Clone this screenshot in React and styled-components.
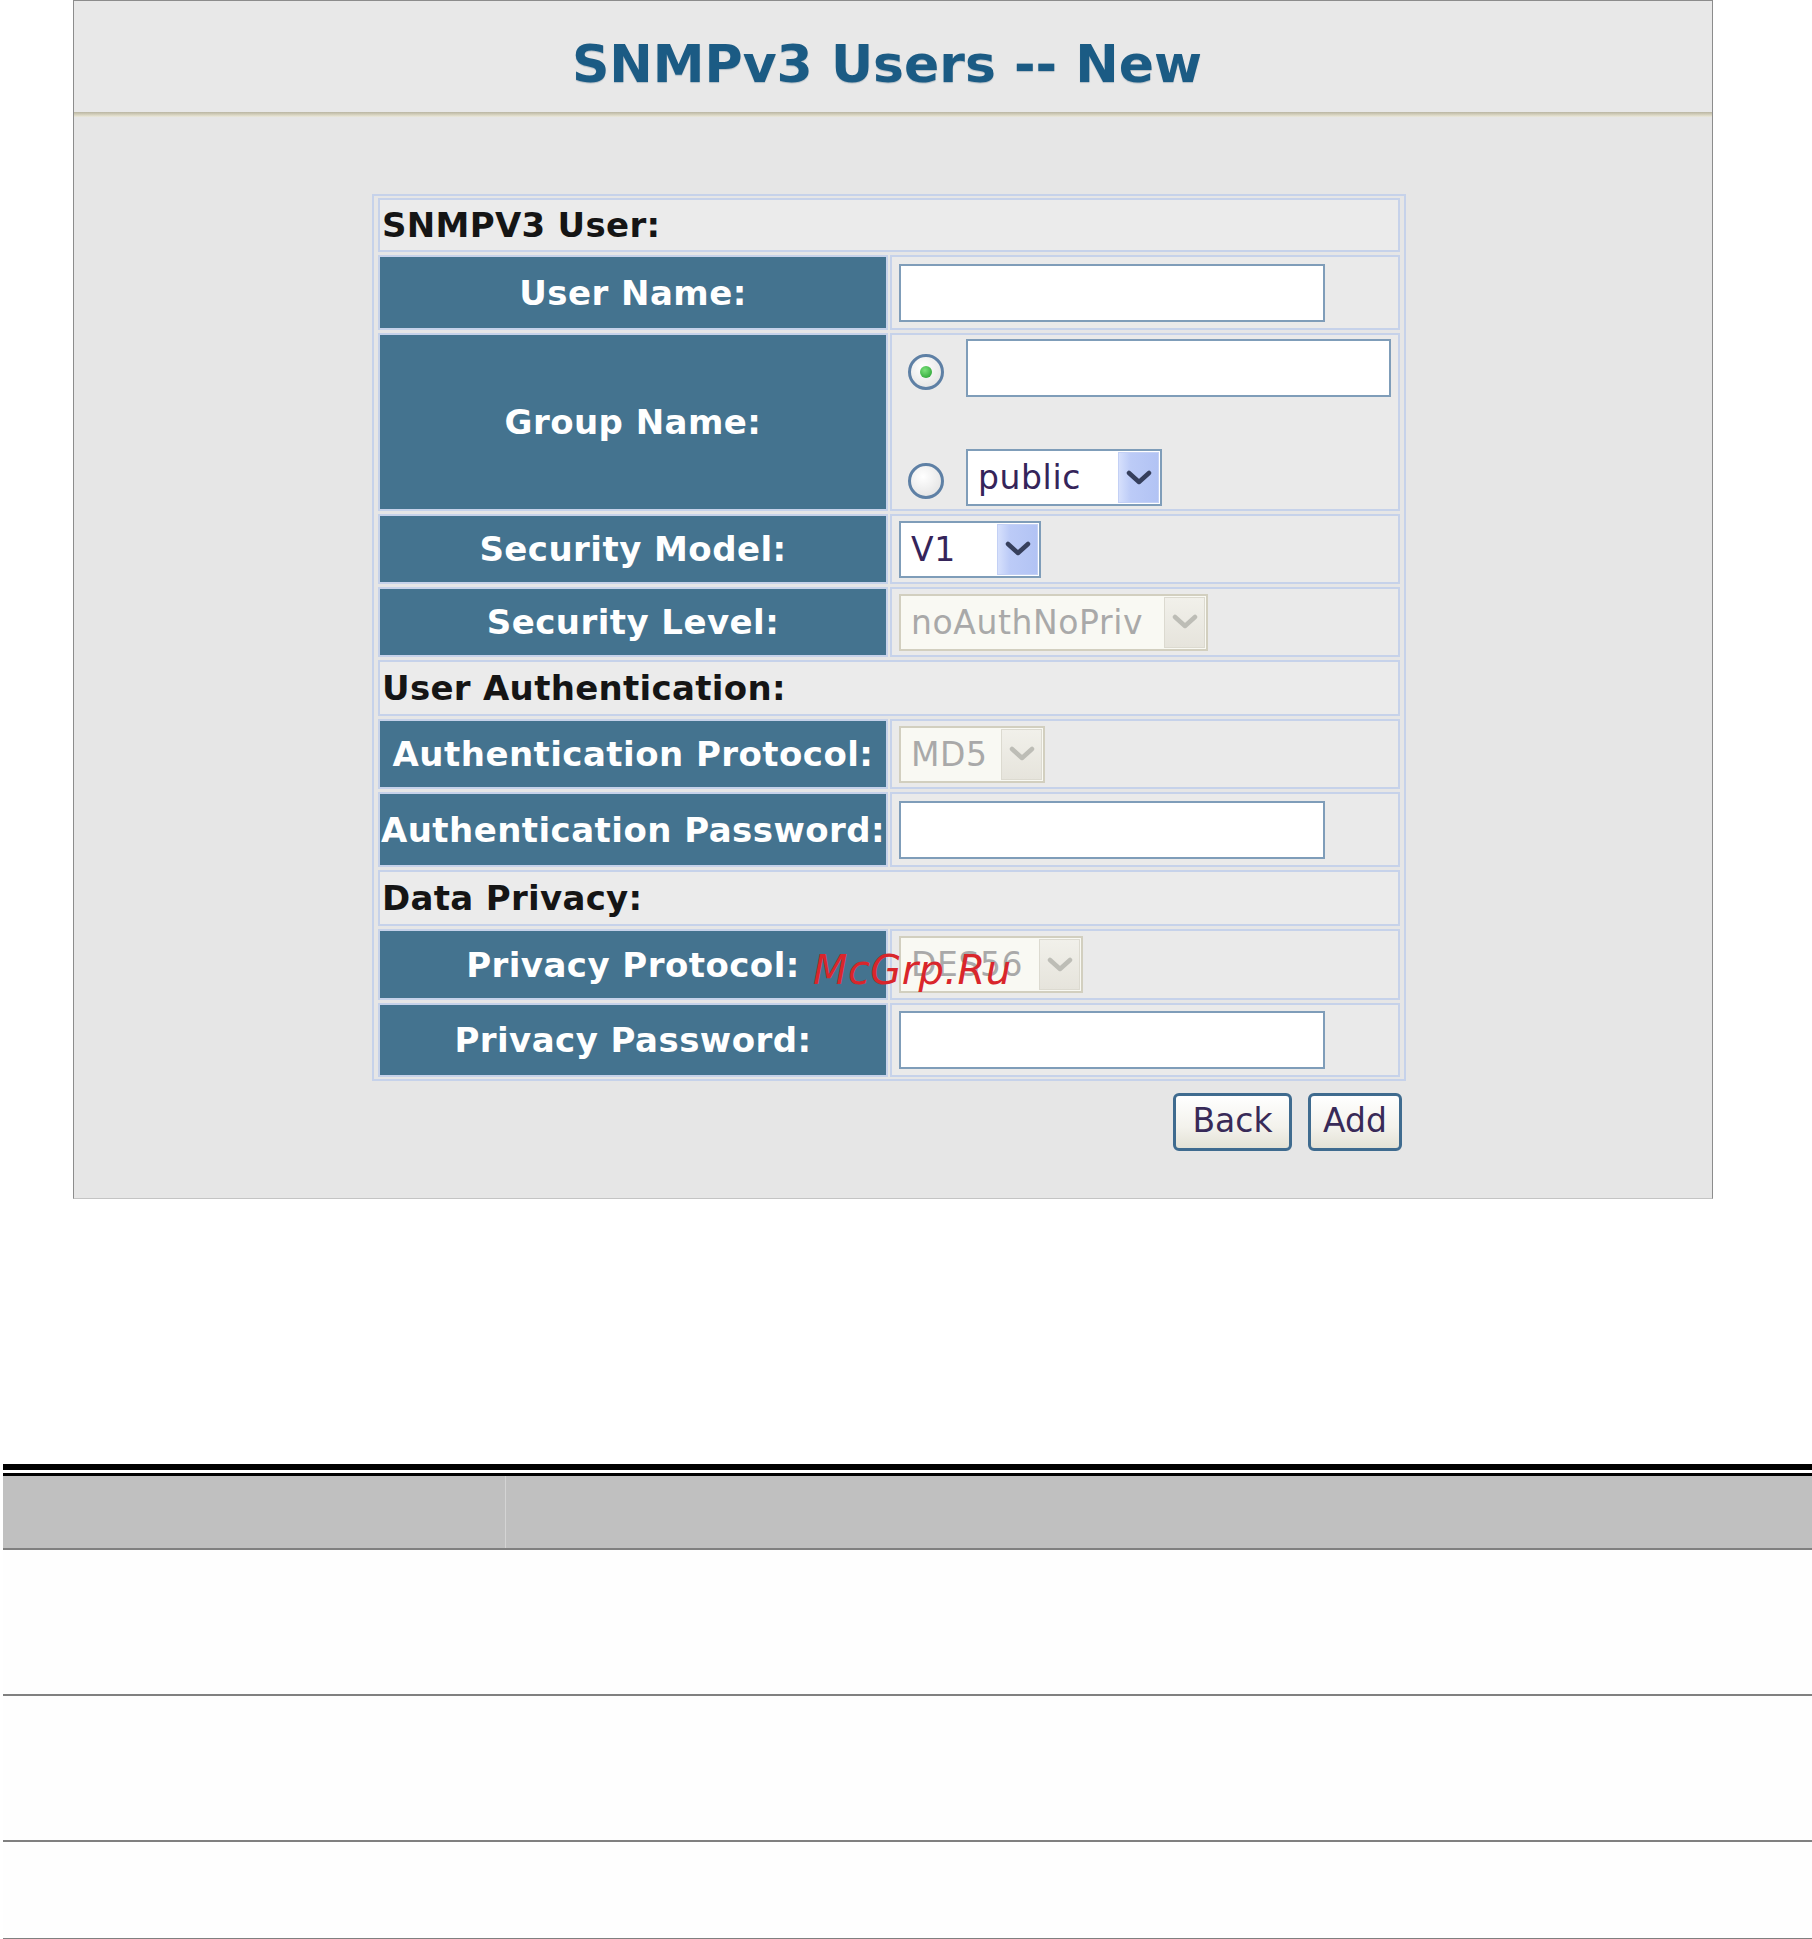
import React from 'react'
import styled, { createGlobalStyle } from 'styled-components'

const Global = createGlobalStyle`
  html, body { margin: 0; padding: 0; background: #fff; }
  body { font-family: "DejaVu Sans", Verdana, sans-serif; }
`

const Page = styled.div`
  position: relative;
  width: 1812px;
  height: 1939px;
  overflow: hidden;
`

const Panel = styled.section`
  margin-left: 73px;
  width: 1640px;
  height: 1199px;
  box-sizing: border-box;
  border: 1px solid #8c8c8c;
  border-bottom-color: #c4c4c4;
  background: #e6e6e6;
`

const TitleBar = styled.div`
  height: 111px;
  box-sizing: border-box;
  display: flex;
  align-items: center;
  justify-content: center;
  padding: 14px 12px 0 0;
  background: #e8e8e8;
`

const Title = styled.h1`
  margin: 0;
  font-family: "DejaVu Sans", Verdana, sans-serif;
  font-weight: 700;
  font-size: 52px;
  color: #1b5b84;
  text-shadow: 0 1px 1px rgba(20, 60, 90, 0.25);
`

const Divider = styled.div`
  height: 5px;
  background: linear-gradient(#b9b5a2, #d9d5c2 60%, #ebe8dc);
`

const Body = styled.div`
  padding: 77px 0 0 298px;
`

const FormTable = styled.div`
  width: 1034px;
  box-sizing: border-box;
  border: 2px solid #c6d2ea;
  padding: 2px 4px;
  display: grid;
  grid-template-columns: 510px 510px;
  column-gap: 2px;
  row-gap: 3px;
`

const Cell = styled.div`
  box-sizing: border-box;
  height: ${(p) => p.h}px;
  border: 2px solid #c6d2ea;
  display: flex;
  align-items: center;
`

const SectionCell = styled(Cell)`
  grid-column: 1 / span 2;
  background: #ebebeb;
  padding-left: 2px;
  font-size: 34px;
  font-weight: 700;
  color: #151515;
  letter-spacing: 0.3px;
`

const LabelCell = styled(Cell)`
  justify-content: center;
  background: #44738f;
  border-color: #c6d2ea;
  font-size: 34px;
  font-weight: 700;
  color: #fff;
  white-space: nowrap;
  letter-spacing: 0.45px;
`

const ValueCell = styled(Cell)`
  background: #eaeaea;
  padding-left: 7px;
`

const GroupCell = styled(ValueCell)`
  flex-direction: column;
  align-items: stretch;
  justify-content: space-between;
  padding: 4px 4px 3px 16px;
`

const RadioLine = styled.div`
  display: flex;
  align-items: center;
  gap: 22px;
`

const Radio = styled.span`
  width: 36px;
  height: 36px;
  margin-top: 7px;
  box-sizing: border-box;
  border-radius: 50%;
  border: 3px solid #5e80a5;
  background: radial-gradient(circle at 40% 35%, #ffffff, #dedede);
  display: flex;
  align-items: center;
  justify-content: center;
  flex-shrink: 0;
  &::after {
    content: '';
    width: 12px;
    height: 12px;
    border-radius: 50%;
    background: ${(p) => (p.checked ? 'radial-gradient(circle at 40% 35%, #7be27b, #1e9a2a)' : 'transparent')};
  }
`

const TextInput = styled.div`
  box-sizing: border-box;
  width: ${(p) => p.w}px;
  height: 58px;
  border: 2px solid #7f9db9;
  background: #fff;
`

const Select = styled.div`
  box-sizing: border-box;
  width: ${(p) => p.w}px;
  height: 57px;
  border: 2px solid ${(p) => (p.disabled ? '#d2cfbf' : '#7f9db9')};
  background: ${(p) => (p.disabled ? '#f9f9f3' : '#fff')};
  display: flex;
  align-items: center;
  justify-content: space-between;
  padding: 1px 1px 1px 10px;
  font-size: 33px;
  letter-spacing: 0.6px;
  color: ${(p) => (p.disabled ? '#a9a9a9' : '#35245a')};
`

const Arrow = styled.span`
  width: 41px;
  height: 100%;
  box-sizing: border-box;
  display: flex;
  align-items: center;
  justify-content: center;
  background: ${(p) =>
    p.disabled
      ? 'linear-gradient(#f1f0ea, #e6e4dc)'
      : 'linear-gradient(90deg, #d6e0fc, #bccbf7 30%, #b2c3f4)'};
  border: 1px solid ${(p) => (p.disabled ? '#dcdad0' : '#c3d0f5')};
`

const Chevron = ({ disabled }) => (
  <svg width="26" height="16" viewBox="0 0 26 16">
    <polyline
      points="3,3 13,12 23,3"
      fill="none"
      stroke={disabled ? '#bdbdb6' : '#363f5c'}
      strokeWidth="4.5"
      strokeLinejoin="round"
      strokeLinecap="round"
    />
  </svg>
)

const Dropdown = ({ w, value, disabled }) => (
  <Select w={w} disabled={disabled}>
    <span>{value}</span>
    <Arrow disabled={disabled}>
      <Chevron disabled={disabled} />
    </Arrow>
  </Select>
)

const ButtonRow = styled.div`
  width: 1034px;
  display: flex;
  justify-content: flex-end;
  gap: 16px;
  margin-top: 12px;
  padding-right: 4px;
  box-sizing: border-box;
`

const Button = styled.button`
  box-sizing: border-box;
  width: ${(p) => p.w}px;
  height: 58px;
  border: 3px solid #3f6b8f;
  border-radius: 6px;
  background: linear-gradient(#ffffff, #f3f2ec 60%, #e4e2d6);
  font-family: "DejaVu Sans", Verdana, sans-serif;
  font-size: 33px;
  color: #382a58;
  padding: 0 0 3px;
`

const Watermark = styled.span`
  position: absolute;
  left: 813px;
  top: 950px;
  font-family: "DejaVu Sans", sans-serif;
  font-style: italic;
  font-size: 40px;
  line-height: 40px;
  letter-spacing: 0.4px;
  color: #d9262b;
  white-space: nowrap;
`

const DocTable = styled.div`
  margin-top: 265px;
  margin-left: 3px;
`

const ThickRule = styled.div`
  height: 6px;
  background: #000;
`

const ThinRule = styled.div`
  height: 3px;
  margin-top: 3px;
  background: #000;
`

const DocRow = styled.div`
  display: grid;
  grid-template-columns: 503px 1fr;
  height: ${(p) => p.h}px;
  background: ${(p) => (p.head ? '#c0c0c0' : '#fefefe')};
  border-bottom: 2px solid #808080;
`

const DocCol = styled.div`
  border-right: ${(p) => (p.divided ? '1px solid #d4d4d4' : 'none')};
`

const rows = [
  { type: 'section', text: 'SNMPV3 User:', h: 54 },
  { type: 'input', label: 'User Name:', h: 75 },
  { type: 'group', label: 'Group Name:', h: 178 },
  { type: 'select', label: 'Security Model:', h: 70, value: 'V1', w: 142 },
  { type: 'select', label: 'Security Level:', h: 70, value: 'noAuthNoPriv', w: 309, disabled: true },
  { type: 'section', text: 'User Authentication:', h: 56 },
  { type: 'select', label: 'Authentication Protocol:', h: 70, value: 'MD5', w: 146, disabled: true },
  { type: 'input', label: 'Authentication Password:', h: 75 },
  { type: 'section', text: 'Data Privacy:', h: 56 },
  { type: 'select', label: 'Privacy Protocol:', h: 71, value: 'DES56', w: 184, disabled: true },
  { type: 'input', label: 'Privacy Password:', h: 74 },
]

export default function App() {
  return (
    <>
      <Global />
      <Page>
        <Panel>
          <TitleBar>
            <Title>SNMPv3 Users -- New</Title>
          </TitleBar>
          <Divider />
          <Body>
            <FormTable>
              {rows.map((r, i) => {
                if (r.type === 'section')
                  return (
                    <SectionCell key={i} h={r.h}>
                      {r.text}
                    </SectionCell>
                  )
                let value
                if (r.type === 'input') {
                  value = (
                    <ValueCell h={r.h}>
                      <TextInput w={426} />
                    </ValueCell>
                  )
                } else if (r.type === 'group') {
                  value = (
                    <GroupCell h={r.h}>
                      <RadioLine>
                        <Radio checked />
                        <TextInput w={425} />
                      </RadioLine>
                      <RadioLine>
                        <Radio />
                        <Dropdown w={196} value="public" />
                      </RadioLine>
                    </GroupCell>
                  )
                } else {
                  value = (
                    <ValueCell h={r.h}>
                      <Dropdown w={r.w} value={r.value} disabled={r.disabled} />
                    </ValueCell>
                  )
                }
                return (
                  <React.Fragment key={i}>
                    <LabelCell h={r.h}>{r.label}</LabelCell>
                    {value}
                  </React.Fragment>
                )
              })}
            </FormTable>
            <ButtonRow>
              <Button w={119}>Back</Button>
              <Button w={94}>Add</Button>
            </ButtonRow>
          </Body>
        </Panel>
        <Watermark>McGrp.Ru</Watermark>
        <DocTable>
          <ThickRule />
          <ThinRule />
          <DocRow head h={72}>
            <DocCol divided />
            <DocCol />
          </DocRow>
          <DocRow h={144}>
            <DocCol />
            <DocCol />
          </DocRow>
          <DocRow h={144}>
            <DocCol />
            <DocCol />
          </DocRow>
          <DocRow h={96}>
            <DocCol />
            <DocCol />
          </DocRow>
        </DocTable>
      </Page>
    </>
  )
}
